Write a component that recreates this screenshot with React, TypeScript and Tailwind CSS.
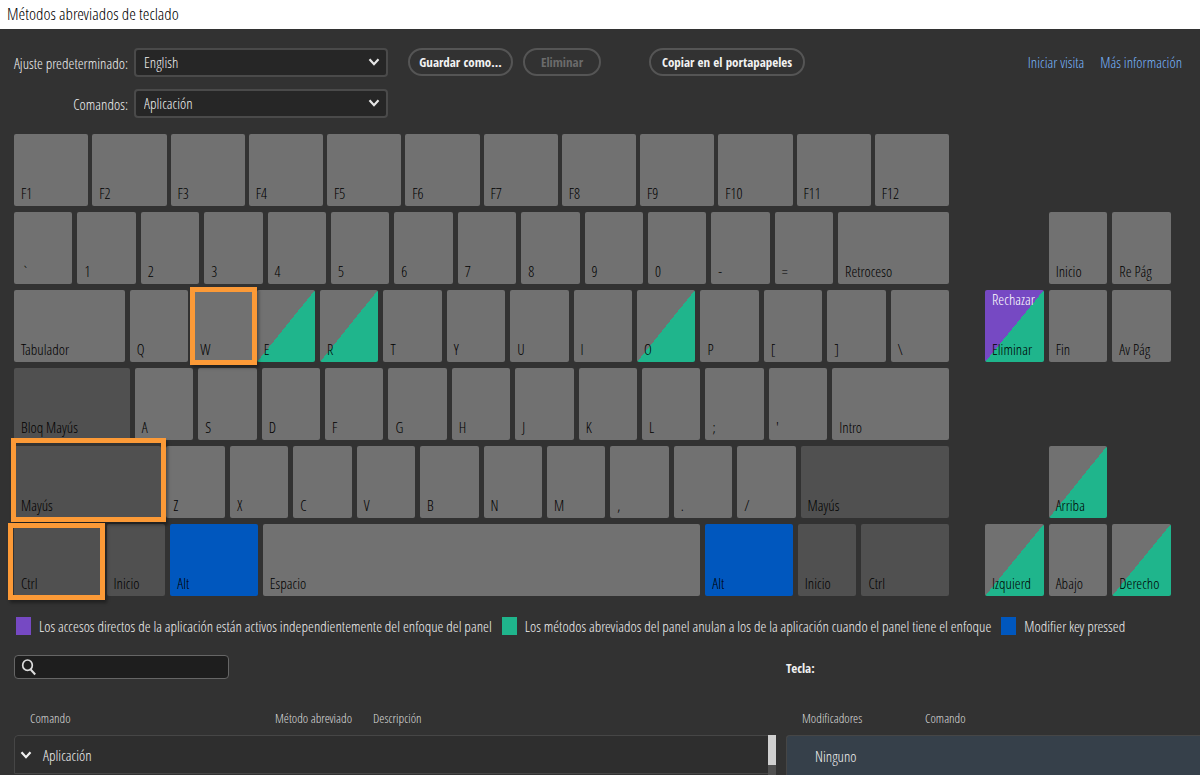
import React from 'react';
import clsx from 'clsx';

type KeyTone = 'plain' | 'modifier' | 'pressed' | 'panel' | 'both';

interface KeyProps {
  label: string;
  size?: string;
  tone?: KeyTone;
  top?: string;
  outline?: string;
}

const tones: Record<KeyTone, string> = {
  plain: 'bg-[#717171]',
  modifier: 'bg-[#505050]',
  pressed: 'bg-[#0057be]',
  panel: 'bg-[linear-gradient(to_bottom_right,#717171_50%,#1fb58c_50%)]',
  both: 'bg-[linear-gradient(to_bottom_right,#7649c3_50%,#1fb58c_50%)]',
};

function Key({ label, size = 'flex-[59]', tone = 'plain', top, outline }: KeyProps) {
  return (
    <button
      type="button"
      className={clsx(
        'relative flex h-18 min-w-0 flex-col justify-between rounded-xs pt-px pb-[5px] text-left leading-4 whitespace-nowrap text-black',
        size,
        tones[tone],
      )}
    >
      <span className="pl-[7px] text-white">{top}</span>
      <span className="pl-[7px]">{label}</span>
      {outline && (
        <span
          className={clsx(
            'pointer-events-none absolute z-10 border-5 border-[#fc9a37] shadow-[2px_3px_3px_rgba(0,0,0,0.35)]',
            outline,
          )}
        />
      )}
    </button>
  );
}

const rows: { gap: string; keys: KeyProps[] }[] = [
  {
    gap: 'gap-1',
    keys: ['F1', 'F2', 'F3', 'F4', 'F5', 'F6', 'F7', 'F8', 'F9', 'F10', 'F11', 'F12'].map((label) => ({ label })),
  },
  {
    gap: 'gap-[5px]',
    keys: [
      ...['`', '1', '2', '3', '4', '5', '6', '7', '8', '9', '0', '-', '='].map((label) => ({ label })),
      { label: 'Retroceso', size: 'flex-[112]' },
    ],
  },
  {
    gap: 'gap-[5px]',
    keys: [
      { label: 'Tabulador', size: 'flex-[112]' },
      { label: 'Q' },
      { label: 'W', outline: '-top-[3px] -right-[5px] -bottom-[3px] -left-[3px]' },
      { label: 'E', tone: 'panel' },
      { label: 'R', tone: 'panel' },
      ...['T', 'Y', 'U', 'I'].map((label) => ({ label })),
      { label: 'O', tone: 'panel' },
      ...['P', '[', ']', '\\'].map((label) => ({ label })),
    ],
  },
  {
    gap: 'gap-[5px]',
    keys: [
      { label: 'Bloq Mayús', size: 'flex-[117]', tone: 'modifier' },
      ...['A', 'S', 'D', 'F', 'G', 'H', 'J', 'K', 'L', ';', "'"].map((label) => ({ label })),
      { label: 'Intro', size: 'flex-[118]' },
    ],
  },
  {
    gap: 'gap-[5px]',
    keys: [
      {
        label: 'Mayús',
        size: 'flex-[149]',
        tone: 'modifier',
        outline: '-top-2 -right-[5px] -bottom-1 -left-[3px]',
      },
      ...['Z', 'X', 'C', 'V', 'B', 'N', 'M', ',', '.', '/'].map((label) => ({ label })),
      { label: 'Mayús', size: 'flex-[150]', tone: 'modifier' },
    ],
  },
  {
    gap: 'gap-[5px]',
    keys: [
      {
        label: 'Ctrl',
        size: 'flex-[88]',
        tone: 'modifier',
        outline: '-top-px -right-[3px] -bottom-1 -left-[6px]',
      },
      { label: 'Inicio', tone: 'modifier' },
      { label: 'Alt', size: 'flex-[88]', tone: 'pressed' },
      { label: 'Espacio', size: 'flex-[440]' },
      { label: 'Alt', size: 'flex-[88]', tone: 'pressed' },
      { label: 'Inicio', tone: 'modifier' },
      { label: 'Ctrl', size: 'flex-[88]', tone: 'modifier' },
    ],
  },
];

const legend = [
  { color: 'bg-[#7649c3]', text: 'Los accesos directos de la aplicación están activos independientemente del enfoque del panel' },
  { color: 'bg-[#1fb58c]', text: 'Los métodos abreviados del panel anulan a los de la aplicación cuando el panel tiene el enfoque' },
  { color: 'bg-[#0057be]', text: 'Modifier key pressed' },
];

function Chevron({ className }: { className: string }) {
  return (
    <svg viewBox="0 0 12 8" className={className} fill="none" stroke="currentColor" strokeWidth="2.2" aria-hidden="true">
      <path d="M1.5 1.2 6 6.2l4.500-5" />
    </svg>
  );
}

function Picker({ id, label, value }: { id: string; label: string; value: string }) {
  return (
    <div className="flex items-center">
      <label htmlFor={id} className="w-[122px] pr-[6px] text-right whitespace-nowrap">
        {label}
      </label>
      <div className="relative">
        <select
          id={id}
          className="block h-[29px] w-[254px] appearance-none rounded-[4px] border-2 border-[#4a4a4a] bg-[#262626] pb-px pl-2 text-[#f0f0f0]"
        >
          <option>{value}</option>
        </select>
        <Chevron className="pointer-events-none absolute top-[10px] right-2 h-2 w-3 text-[#e6e6e6]" />
      </div>
    </div>
  );
}

const pill =
  "h-7 rounded-full border-2 border-[#555555] font-['Open_Sans_Condensed','Lato',sans-serif] text-[13px] font-bold whitespace-nowrap";

export default function App() {
  return (
    <div className="flex min-h-screen flex-col bg-[#323232] font-['Open_Sans_Condensed_Light','Lato',sans-serif] text-[15px] leading-5 text-[#f0f0f0]">
      <header className="h-[29px] bg-white px-[7px] py-1">
        <h1 className="text-[17px] text-black">Métodos abreviados de teclado</h1>
      </header>

      <div className="flex items-start pt-[19px] pr-[18px] pl-3">
        <div className="flex flex-col gap-3">
          <Picker id="preset" label="Ajuste predeterminado:" value="English" />
          <Picker id="commands" label="Comandos:" value="Aplicación" />
        </div>
        <button type="button" className={clsx(pill, 'ml-5 w-[105px] text-[#f2f2f2]')}>
          Guardar como...
        </button>
        <button type="button" disabled className={clsx(pill, 'ml-[10px] w-[78px] text-[#6b6b6b]')}>
          Eliminar
        </button>
        <button type="button" className={clsx(pill, 'ml-12 w-[156px] text-[#f2f2f2]')}>
          Copiar en el portapapeles
        </button>
        <nav className="ml-auto flex gap-4 pt-1 text-[#78b4fa]">
          <a href="#visita">Iniciar visita</a>
          <a href="#info">Más información</a>
        </nav>
      </div>

      <div className="flex gap-9 pt-4 pr-[29px] pl-[14px]">
        <div className="flex min-w-0 flex-[935] flex-col gap-[6px]">
          {rows.map((row, i) => (
            <div key={i} className={clsx('flex', row.gap)}>
              {row.keys.map((k, j) => (
                <Key key={j} {...k} />
              ))}
            </div>
          ))}
        </div>
        <div className="grid min-w-0 flex-[186] grid-cols-3 grid-rows-[repeat(6,72px)] gap-x-[5px] gap-y-[6px]">
          <Key label="Inicio" size="col-start-2 row-start-2" />
          <Key label="Re Pág" size="col-start-3 row-start-2" />
          <Key label="Eliminar" size="col-start-1 row-start-3" tone="both" top="Rechazar" />
          <Key label="Fin" size="col-start-2 row-start-3" />
          <Key label="Av Pág" size="col-start-3 row-start-3" />
          <Key label="Arriba" size="col-start-2 row-start-5" tone="panel" />
          <Key label="Izquierd" size="col-start-1 row-start-6" tone="panel" />
          <Key label="Abajo" size="col-start-2 row-start-6" />
          <Key label="Derecho" size="col-start-3 row-start-6" tone="panel" />
        </div>
      </div>

      <ul className="flex gap-[10px] pt-5 pl-4">
        {legend.map((item) => (
          <li key={item.text} className="flex items-center gap-2 whitespace-nowrap">
            <span className={clsx('h-[18px] w-[15px]', item.color)} />
            {item.text}
          </li>
        ))}
      </ul>

      <div className="flex flex-1 gap-[10px] pt-[19px] pl-[14px]">
        <section className="flex min-w-0 flex-[762] flex-col">
          <div className="relative">
            <input
              type="search"
              aria-label="Buscar"
              className="block h-6 w-[215px] rounded-[4px] border border-[#666666] bg-[#1e1e1e] pl-7 outline-none"
            />
            <svg viewBox="0 0 16 18" className="absolute top-1 left-[7px] h-[18px] w-4 text-[#dddddd]" fill="none" stroke="currentColor" aria-hidden="true">
              <ellipse cx="6.500" cy="6.200" rx="4.800" ry="5.200" strokeWidth="1.700" />
              <path d="m9.700 10.500 4.500 5" strokeWidth="2" />
            </svg>
          </div>
          <div className="relative flex-1 pt-6">
            <table className="w-full table-fixed border-separate border-spacing-0 text-left">
              <thead>
                <tr className="h-8 text-[13px] leading-4 text-[#dcdcdc]">
                  <th className="w-[261px] pb-[3px] pl-4 font-normal">Comando</th>
                  <th className="w-[98px] pb-[3px] font-normal">Método abreviado</th>
                  <th className="pb-[3px] font-normal">Descripción</th>
                </tr>
              </thead>
              <tbody>
                <tr className="h-[39px] bg-[#2e2e2e]">
                  <td colSpan={3} className="rounded-tl-[4px] border border-[#464646] pl-[5px]">
                    <button type="button" className="flex items-center gap-[11px]">
                      <Chevron className="h-2 w-3 text-[#f0f0f0]" />
                      Aplicación
                    </button>
                  </td>
                </tr>
              </tbody>
            </table>
            <div className="absolute top-14 right-0 bottom-0 w-2 bg-[#505050]">
              <div className="h-[30px] bg-[#d0d0d0]" />
            </div>
          </div>
        </section>

        <section className="flex min-w-0 flex-[414] flex-col">
          <h2 className="h-6 pt-[3px] font-['Open_Sans_Condensed','Lato',sans-serif] text-[13px] font-bold text-[#f0f0f0]">Tecla:</h2>
          <div className="flex-1 pt-6">
            <table className="w-full table-fixed border-separate border-spacing-0 text-left">
              <thead>
                <tr className="h-8 text-[13px] leading-4 text-[#dcdcdc]">
                  <th className="w-[139px] pb-[3px] pl-4 font-normal">Modificadores</th>
                  <th className="pb-[3px] font-normal">Comando</th>
                </tr>
              </thead>
              <tbody>
                <tr className="h-10 bg-[#36404a]">
                  <td colSpan={2} className="rounded-tl-[4px] border-t border-l border-[#464646] pl-7">
                    Ninguno
                  </td>
                </tr>
              </tbody>
            </table>
          </div>
        </section>
      </div>
    </div>
  );
}
